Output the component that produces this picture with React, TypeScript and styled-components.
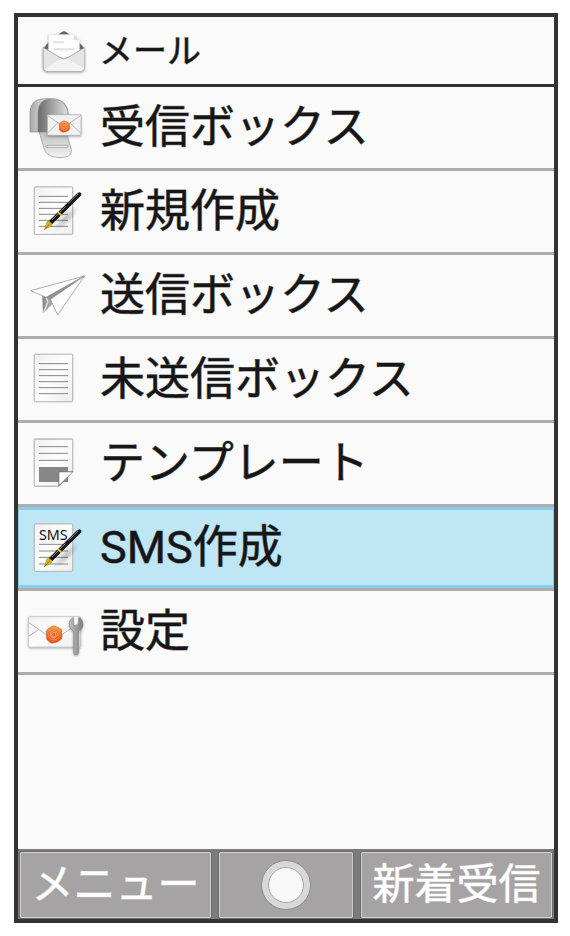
import React from "react";
import styled, { createGlobalStyle, css } from "styled-components";

const GlobalStyle = createGlobalStyle`
  * { box-sizing: border-box; }
  body {
    margin: 0;
    background: #ffffff;
    color: #161616;
    font-family: Roboto, "Noto Sans CJK JP", sans-serif;
  }
`;

const Page = styled.div`
  display: flex;
  min-height: 100vh;
  padding: 13px 12px 13px 14px;
`;

const Screen = styled.main`
  flex: 1;
  min-width: 0;
  display: flex;
  flex-direction: column;
  border: 4px solid #333333;
  background: #fafafa;
`;

const roundedStrokes = css`
  -webkit-text-stroke: 1px color-mix(in srgb, currentColor 55%, transparent);
  stroke-linejoin: round;
`;

const TitleBar = styled.header`
  display: flex;
  align-items: center;
  gap: 11px;
  height: 70px;
  padding-left: 6px;
  border-bottom: 3px solid #333333;
`;

const Title = styled.h1`
  margin: 0;
  font-size: 34px;
  line-height: 40px;
  font-weight: 400;
  white-space: nowrap;
  ${roundedStrokes}
`;

const MenuList = styled.ul`
  flex: 1;
  margin: 0;
  padding: 0;
  list-style: none;
`;

const MenuItem = styled.li`
  border-bottom: 3px solid #adadad;
`;

const MenuButton = styled.button<{ $selected: boolean }>`
  display: flex;
  align-items: center;
  gap: 12px;
  width: 100%;
  height: 81px;
  padding: 0 0 0 6px;
  border: 0;
  background: transparent;
  color: inherit;
  font-family: inherit;
  text-align: left;
  ${(p) =>
    p.$selected &&
    css`
      background: #bfe6f4;
      box-shadow: inset 0 3px #87ceeb, inset 0 -3px #87ceeb,
        inset 1px 0 #87ceeb, inset -1px 0 #87ceeb;
    `}
`;

const MenuLabel = styled.span`
  font-size: 45px;
  line-height: 72px;
  white-space: nowrap;
  ${roundedStrokes}
`;

const IconSvg = styled.svg`
  flex: none;
  display: block;
  width: 64px;
`;

const SoftKeys = styled.footer`
  display: grid;
  grid-template-columns: 10fr 7fr 10fr;
  gap: 8px;
  padding: 3px 2px 1px;
  background: #7c7c7c;
`;

const SoftKey = styled.button`
  display: flex;
  align-items: center;
  justify-content: center;
  min-width: 0;
  height: 66px;
  padding: 0;
  border: 1px solid #d0d0d0;
  border-radius: 1px;
  outline: 1px solid #6c6c6c;
  background: #a5a3a4;
  color: #ffffff;
  font-family: inherit;
  font-size: 42px;
  line-height: 60px;
  white-space: nowrap;
  ${roundedStrokes}
`;

const CenterDot = styled.span`
  width: 50px;
  height: 50px;
  border: 1px solid #8c8c8c;
  border-radius: 50%;
  background: #d8d8d8;
  display: grid;
  place-items: center;

  &::after {
    content: "";
    width: 34px;
    height: 34px;
    border: 1px solid #a8a8a8;
    border-radius: 50%;
    background: #f8f8f8;
  }
`;

const SharedDefs = styled.svg`
  position: absolute;
  width: 0;
  height: 0;
`;

function Gradients() {
  return (
    <SharedDefs aria-hidden="true">
      <defs>
        <linearGradient id="paper" x1="0" y1="0" x2="1" y2="1">
          <stop offset="0" stopColor="#f1f1f1" />
          <stop offset="0.5" stopColor="#fdfdfd" />
          <stop offset="1" stopColor="#ededed" />
        </linearGradient>
        <linearGradient id="steel" x1="0" y1="0" x2="1" y2="0">
          <stop offset="0" stopColor="#696969" />
          <stop offset="1" stopColor="#dedede" />
        </linearGradient>
        <linearGradient id="shell" x1="0" y1="0" x2="1" y2="0">
          <stop offset="0" stopColor="#a8a8a8" />
          <stop offset="0.4" stopColor="#dddddd" />
          <stop offset="1" stopColor="#858585" />
        </linearGradient>
        <linearGradient id="flap" x1="0" y1="0" x2="0" y2="1">
          <stop offset="0" stopColor="#bcbcbc" />
          <stop offset="1" stopColor="#f3f3f3" />
        </linearGradient>
        <linearGradient id="wrench" x1="0" y1="0" x2="1" y2="0">
          <stop offset="0" stopColor="#bdbdbd" />
          <stop offset="0.5" stopColor="#a0a0a0" />
          <stop offset="1" stopColor="#7c7c7c" />
        </linearGradient>
        <linearGradient id="wax" x1="0" y1="0" x2="0" y2="1">
          <stop offset="0" stopColor="#fbb03a" />
          <stop offset="0.5" stopColor="#f56a1c" />
          <stop offset="1" stopColor="#f0521a" />
        </linearGradient>
        <radialGradient id="shade">
          <stop offset="0" stopColor="#000000" stopOpacity="0.22" />
          <stop offset="1" stopColor="#000000" stopOpacity="0" />
        </radialGradient>
        <filter id="soft" x="-20%" y="-20%" width="140%" height="150%">
          <feDropShadow dx="0" dy="3" stdDeviation="3" floodOpacity="0.35" />
        </filter>
      </defs>
    </SharedDefs>
  );
}

function Icon(props: { box: string; children: React.ReactNode }) {
  return (
    <IconSvg viewBox={props.box} aria-hidden="true">
      {props.children}
    </IconSvg>
  );
}

function Sheet(props: { lines: number[] }) {
  return (
    <>
      <rect x="41" y="49" width="119" height="146" rx="5" fill="#cfcfcf" />
      <rect x="43" y="51" width="115" height="142" rx="3" fill="url(#paper)" stroke="#a0a0a0" strokeWidth="2" />
      {props.lines.map((y) => (
        <path key={y} d={`M57 ${y}H144`} stroke="#878787" strokeWidth="3" />
      ))}
    </>
  );
}

function Pen() {
  return (
    <>
      <ellipse cx="138" cy="145" rx="52" ry="17" transform="rotate(-45 138 145)" fill="url(#shade)" />
      <path d="M73 179L80 156L88 151L98 161L93 169Z" fill="#d1b51d" stroke="#8a7614" strokeWidth="1" />
      <path d="M74 178L88 163" stroke="#675711" strokeWidth="2" />
      <path d="M87 153L169 72Q177 65 182 68T181 79L97 162Z" fill="#171717" />
      <path d="M96 150L137 109M145 100L174 72" stroke="#858585" strokeWidth="3" />
      <path d="M113 126L124 136" stroke="#e9b81e" strokeWidth="6" />
    </>
  );
}

function Seal(props: { x: number; y: number; size: number }) {
  return (
    <g transform={`translate(${props.x} ${props.y}) scale(${props.size})`}>
      <path
        d="M-5 -25Q0 -29 6 -24L17 -19Q25 -16 23 -7L24 6Q24 15 16 18Q5 25 0 24Q-7 28 -13 22L-20 16Q-25 12 -22 5L-23 -7Q-22 -17 -15 -19Z"
        fill="url(#wax)"
        stroke="#c75a28"
        strokeWidth="2"
      />
      <circle r="16" fill="#f06126" stroke="#f98a45" strokeWidth="3" />
      <path
        d="M5 -5A7 7 0 1 0 5 5M5 -7V3Q10 8 11 0A11 11 0 1 0 5 9"
        fill="none"
        stroke="#ffc8a0"
        strokeWidth="2"
      />
    </g>
  );
}

function OpenMailIcon() {
  return (
    <Icon box="42 27 192 201">
      <g filter="url(#soft)">
        <path d="M98 120L151 75Q162 65 173 75L225 120V177Q225 191 211 191H112Q98 191 98 177Z" fill="#ababab" />
        <path d="M151 76Q162 65 173 76L215 111L222 123H102L110 109Z" fill="#656565" />
        <path d="M116 80H192L208 96V148H116Z" fill="#fdfdfd" stroke="#e6e6e6" strokeWidth="2" />
        <path d="M192 80V96H208Z" fill="#dedede" />
        <path d="M130 103H162M130 124H194" stroke="#e0e0e0" strokeWidth="6" />
        <path d="M101 119L151 149Q162 157 173 149L223 119V176Q223 189 210 189H113Q101 189 101 176Z" fill="#e5e5e5" />
        <path d="M104 184L162 146L222 180Q218 189 210 189H113Q106 189 104 184Z" fill="#f3f3f3" />
        <path d="M101 119L151 149Q162 157 173 149L223 119" fill="none" stroke="#858585" strokeWidth="2" />
      </g>
    </Icon>
  );
}

function MailboxIcon() {
  return (
    <Icon box="12 -9 192 243">
      <path d="M57 124H138L153 175Q158 192 142 200Q112 207 89 196Q77 190 73 179Z" fill="url(#flap)" stroke="#909090" strokeWidth="2" />
      <path d="M30 126V66Q32 26 75 26H102Q143 31 145 73V118H82V126Z" fill="url(#shell)" stroke="#898989" strokeWidth="2" />
      <path d="M54 126V68Q56 27 91 27Q139 27 143 73V118H82V126Z" fill="url(#steel)" />
      <path d="M54 126V68Q56 27 91 27" fill="none" stroke="#8b8b8b" strokeWidth="2" />
      <rect x="77" y="166" width="67" height="6" rx="3" fill="#fdfdfd" stroke="#858585" strokeWidth="2" />
      <g filter="url(#soft)">
        <rect x="82" y="74" width="101" height="62" rx="2" fill="#f1f1f1" stroke="#a5a5a5" strokeWidth="2" />
        <path d="M82 76L132 111L183 76M83 129L112 100M182 129L151 100" fill="none" stroke="#bababa" strokeWidth="3" />
      </g>
      <Seal x={133} y={110} size={0.67} />
    </Icon>
  );
}

function ComposeIcon() {
  return (
    <Icon box="12 3 192 243">
      <Sheet lines={[79, 97, 115, 133, 151, 169]} />
      <Pen />
    </Icon>
  );
}

function PaperPlaneIcon() {
  return (
    <Icon box="12 -15 192 243">
      <path d="M68 108L79 112L193 49L91 118L70 159Z" fill="#929292" stroke="#747474" strokeWidth="2" />
      <path d="M79 113L70 159L104 125Z" fill="#a4a4a4" />
      <path d="M78 113L84 125L70 159" fill="none" stroke="#dddddd" strokeWidth="4" />
      <path d="M32 92L193 48L78 112Z" fill="url(#paper)" stroke="#898989" strokeWidth="2" />
      <path d="M193 48L91 118L113 165Z" fill="url(#paper)" stroke="#858585" strokeWidth="2" />
    </Icon>
  );
}

function DraftIcon() {
  return (
    <Icon box="12 5 192 243">
      <Sheet lines={[79, 97, 115, 133, 151, 169]} />
    </Icon>
  );
}

function TemplateIcon() {
  return (
    <Icon box="12 3 192 243">
      <path d="M45 49H157Q160 49 160 53V150L117 195H45Q41 195 41 190V53Q41 49 45 49Z" fill="#cfcfcf" />
      <path d="M46 52H155Q158 52 158 55V149L117 192H46Q43 192 43 189V55Q43 52 46 52Z" fill="url(#paper)" stroke="#a0a0a0" strokeWidth="2" />
      <path d="M57 74H144M57 94H144M57 115H144" stroke="#878787" strokeWidth="3" />
      <path d="M57 135H144V180H57Z" fill="#878787" />
      <path d="M115 194V148H160Z" fill="#777777" />
      <path d="M118 188V151H156Z" fill="#ffffff" />
    </Icon>
  );
}

const SmsMark = styled.text`
  font: 400 43px "Noto Sans", sans-serif;
  fill: #111111;
`;

function SmsIcon() {
  return (
    <Icon box="12 0 192 243">
      <Sheet lines={[112, 132, 151, 171]} />
      <SmsMark x="57" y="99">SMS</SmsMark>
      <Pen />
    </Icon>
  );
}

function SettingsIcon() {
  return (
    <Icon box="12 -27 192 243">
      <g filter="url(#soft)">
        <rect x="25" y="50" width="157" height="91" rx="4" fill="url(#paper)" stroke="#b5b5b5" strokeWidth="2" />
      </g>
      <path d="M27 68L102 120L180 67M27 108L53 91" fill="none" stroke="#b5b5b5" strokeWidth="3" />
      <Seal x={102} y={104} size={1} />
      <path
        d="M160 52Q145 61 148 77Q149 88 161 94V157Q161 165 168 165T176 157V94Q188 87 189 75Q190 59 176 52V73L168 79L160 73Z"
        fill="url(#wrench)"
        stroke="#858585"
        strokeWidth="2"
        filter="url(#soft)"
      />
    </Icon>
  );
}

const items = [
  { label: "受信ボックス", icon: <MailboxIcon /> },
  { label: "新規作成", icon: <ComposeIcon /> },
  { label: "送信ボックス", icon: <PaperPlaneIcon /> },
  { label: "未送信ボックス", icon: <DraftIcon /> },
  { label: "テンプレート", icon: <TemplateIcon /> },
  { label: "SMS作成", icon: <SmsIcon />, selected: true },
  { label: "設定", icon: <SettingsIcon /> },
];

export default function App() {
  return (
    <Page lang="ja">
      <GlobalStyle />
      <Gradients />
      <Screen>
        <TitleBar>
          <OpenMailIcon />
          <Title>メール</Title>
        </TitleBar>
        <MenuList>
          {items.map((item) => (
            <MenuItem key={item.label}>
              <MenuButton
                type="button"
                $selected={Boolean(item.selected)}
                aria-current={item.selected ? "true" : undefined}
              >
                {item.icon}
                <MenuLabel>{item.label}</MenuLabel>
              </MenuButton>
            </MenuItem>
          ))}
        </MenuList>
        <SoftKeys>
          <SoftKey type="button">メニュー</SoftKey>
          <SoftKey type="button" aria-label="決定">
            <CenterDot />
          </SoftKey>
          <SoftKey type="button">新着受信</SoftKey>
        </SoftKeys>
      </Screen>
    </Page>
  );
}
